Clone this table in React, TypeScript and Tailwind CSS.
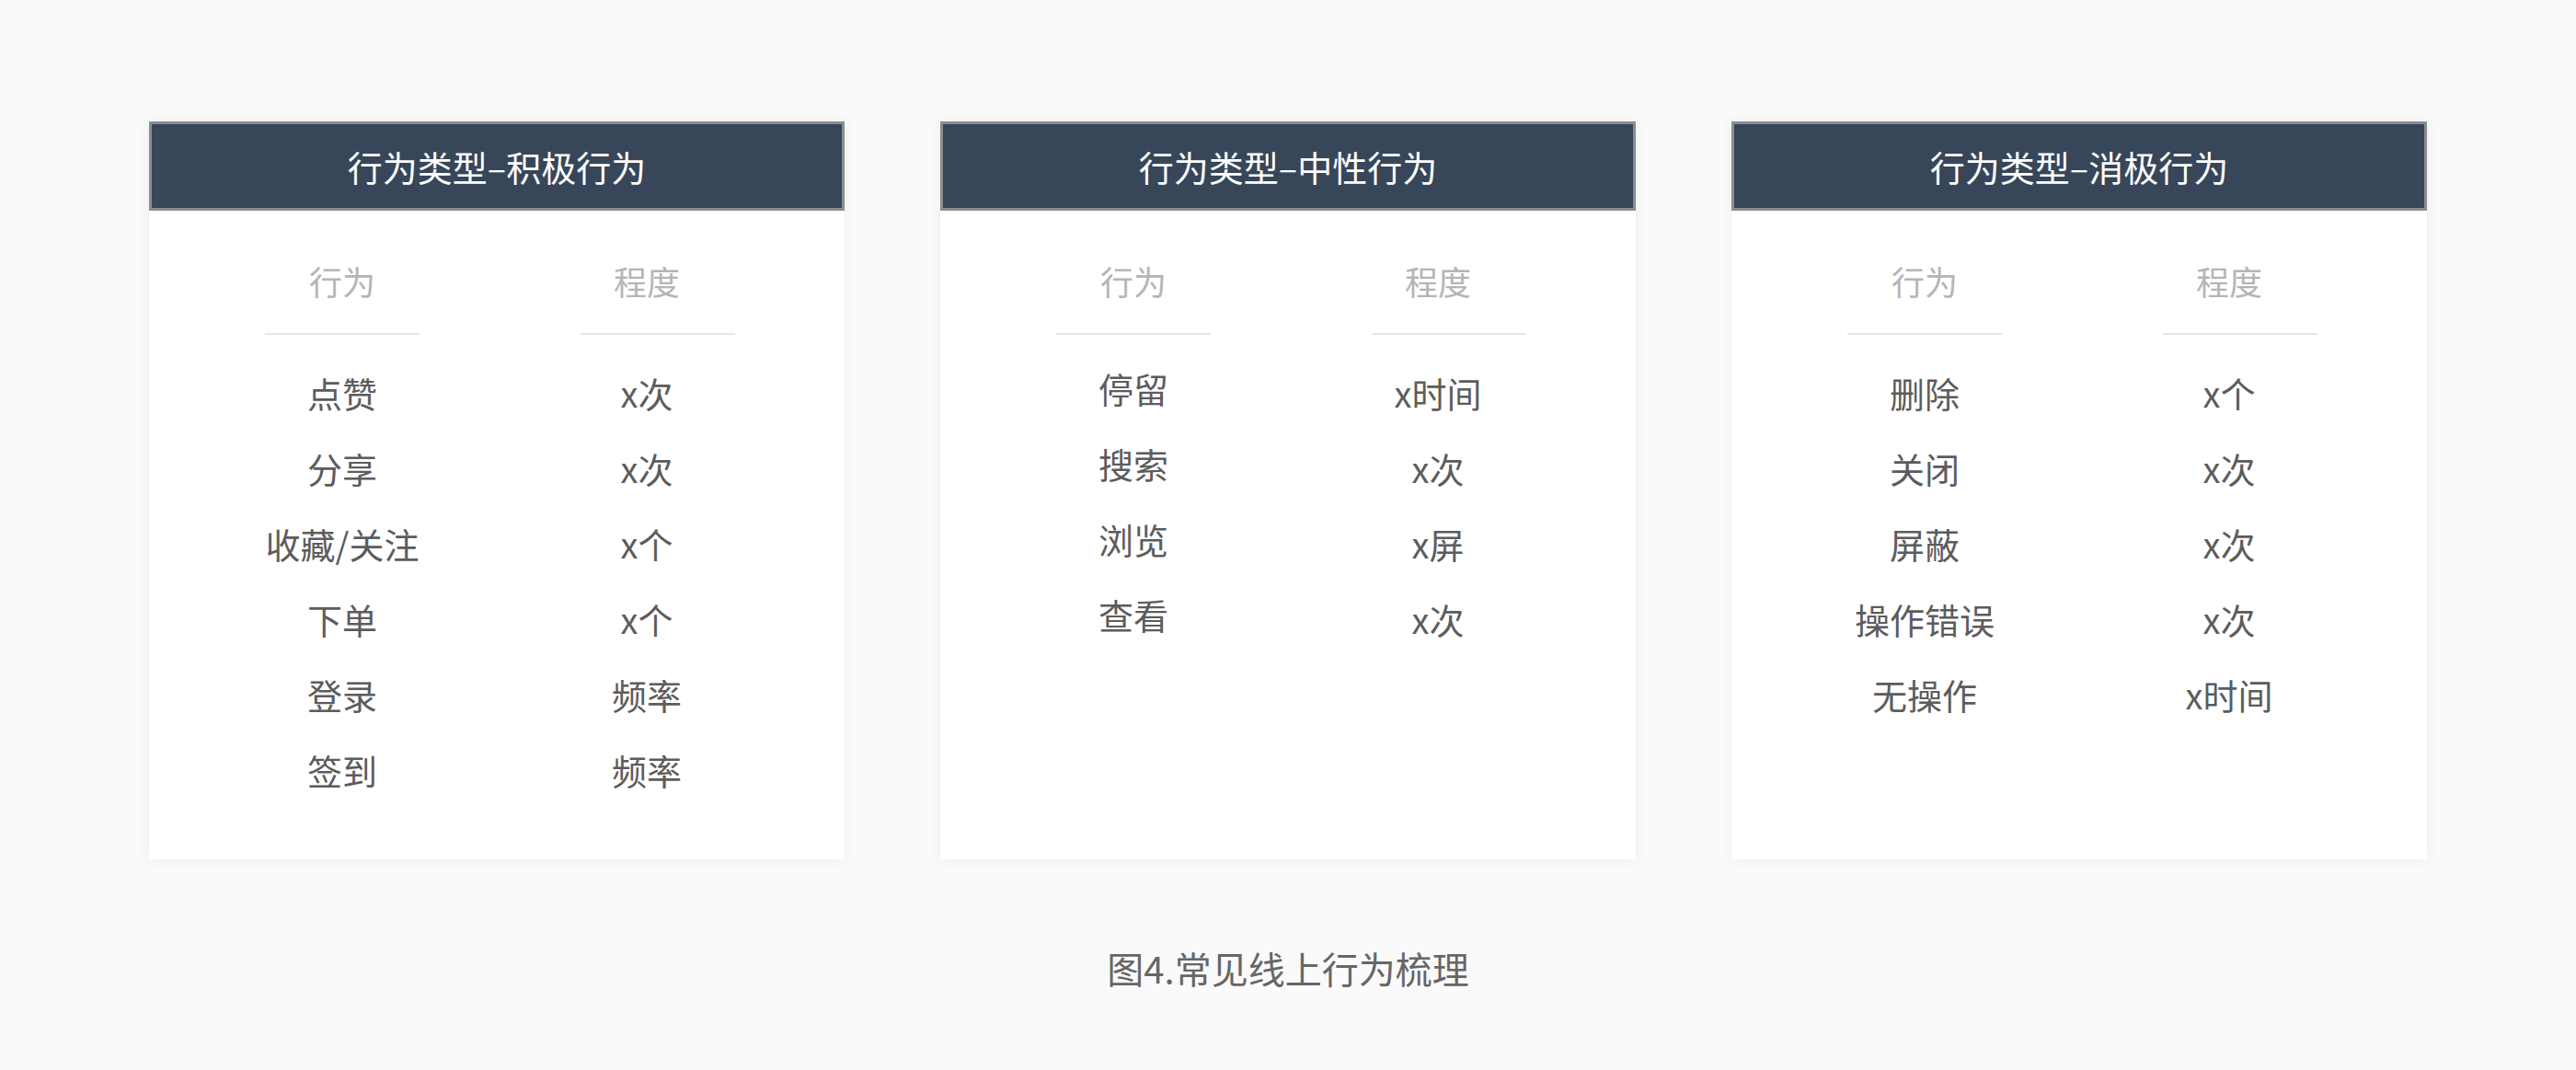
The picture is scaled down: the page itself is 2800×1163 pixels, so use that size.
import React from "react";

type Card = {
  title: string;
  left: string[];
  right: string[];
  leftShift?: boolean;
};

const cards: Card[] = [
  {
    title: "行为类型–积极行为",
    left: ["点赞", "分享", "收藏/关注", "下单", "登录", "签到"],
    right: ["x次", "x次", "x个", "x个", "频率", "频率"],
  },
  {
    title: "行为类型–中性行为",
    left: ["停留", "搜索", "浏览", "查看"],
    right: ["x时间", "x次", "x屏", "x次"],
    leftShift: true,
  },
  {
    title: "行为类型–消极行为",
    left: ["删除", "关闭", "屏蔽", "操作错误", "无操作"],
    right: ["x个", "x次", "x次", "x次", "x时间"],
  },
];

function Column({
  head,
  items,
  shift,
  second,
}: {
  head: string;
  items: string[];
  shift?: boolean;
  second?: boolean;
}) {
  return (
    <div className="flex w-[168px] flex-col">
      <div
        className={`flex h-[50px] items-center justify-center whitespace-nowrap text-[36px] leading-[50px] text-[#b5b5b5] ${
          second ? "pr-[24px]" : ""
        }`}
      >
        {head}
      </div>
      <div className="mt-[32px] h-[2px] w-full bg-[#e6e6e6]" />
      <div className={`flex flex-col ${shift ? "mt-[16px]" : "mt-[21px]"}`}>
        {items.map((t, i) => (
          <div
            key={i}
            className={`flex h-[82px] items-center justify-center whitespace-nowrap text-[38px] text-[#5c5c5c] ${
              second ? "pr-[24px]" : ""
            }`}
          >
            {t}
          </div>
        ))}
      </div>
    </div>
  );
}

export default function App() {
  return (
    <div
      className="flex h-[1163px] w-full flex-col items-center overflow-hidden bg-[#fafafa] pt-[132px]"
      style={{ fontFamily: '"Noto Sans CJK SC", "Noto Sans", sans-serif' }}
    >
      <div className="flex gap-[104px]">
        {cards.map((c, i) => (
          <div
            key={i}
            className="flex w-[756px] flex-col bg-white shadow-[0_0_14px_rgba(0,0,0,0.06)]"
          >
            <div className="flex h-[97px] items-center justify-center border-[3px] border-[#8a8c8f] bg-[#374659] text-[38px] text-white">
              {c.title}
            </div>
            <div className="flex gap-[175px] pb-[57px] pl-[126px] pt-[51px]">
              <Column head="行为" items={c.left} shift={c.leftShift} />
              <Column head="程度" items={c.right} second />
            </div>
          </div>
        ))}
      </div>
      <div className="mt-[90px] text-[40px] leading-[56px] text-[#666666]">
        图4.常见线上行为梳理
      </div>
    </div>
  );
}
